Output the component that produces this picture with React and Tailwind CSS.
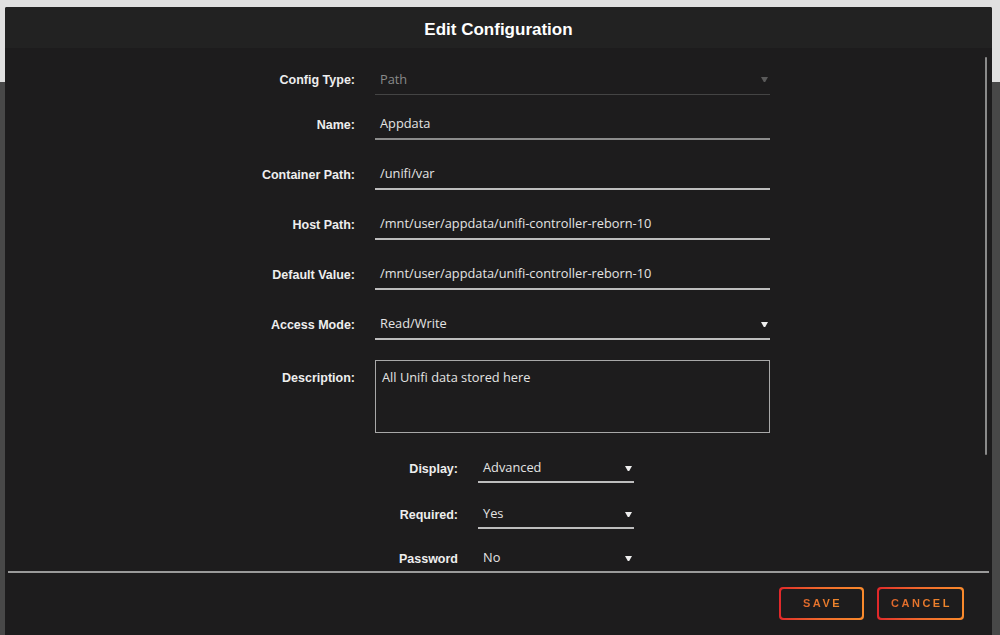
import React from "react";

const Arrow = ({ className }) => (
  <svg width="7" height="7" viewBox="0 0 7 7" className={className}>
    <path d="M0 1 H7 L4.2 6 H2.8 Z" fill="currentColor" />
  </svg>
);

const labelCls = "text-right text-[12.5px] font-bold text-[#eeeeee]";
const valueFont = { fontFamily: '"Open Sans", "Liberation Sans", sans-serif' };

function TextRow({ label, value, mt, disabled, select, line }) {
  return (
    <div className={`flex items-center ${mt}`}>
      <div className={`w-[350px] ${labelCls}`}>{label}</div>
      <div
        className={`ml-[20px] w-[395px] h-[30px] flex items-center justify-between pl-[5px] pr-[2px] ${line}`}
      >
        <span style={valueFont} className={`text-[12.8px] ${disabled ? "text-[#8a8a8a]" : "text-[#e4e4e4]"}`}>{value}</span>
        {select && <Arrow className={disabled ? "text-[#5a5a5a]" : "text-[#eeeeee]"} />}
      </div>
    </div>
  );
}

function SmallSelect({ label, value, mt, line }) {
  return (
    <div className={`flex items-center ${mt}`}>
      <div className={`w-[453px] ${labelCls}`}>{label}</div>
      <div className={`ml-[20px] w-[156px] h-[28px] flex items-center justify-between pl-[5px] pr-[2px] ${line}`}>
        <span style={valueFont} className="text-[12.8px] text-[#e4e4e4]">{value}</span>
        <Arrow className="text-[#eeeeee]" />
      </div>
    </div>
  );
}

function GradButton({ children, w }) {
  return (
    <div className={`${w} h-[33px] rounded-[4px] p-[2px] bg-gradient-to-r from-[#e0262a] via-[#f06a2c] to-[#f98a2c]`}>
      <div className="w-full h-full rounded-[3px] bg-[#1d1c1d] flex items-center justify-center">
        <span className="text-[11px] font-bold tracking-[2.5px] pl-[2px] bg-gradient-to-r from-[#e0662c] to-[#f0892c] bg-clip-text text-transparent">
          {children}
        </span>
      </div>
    </div>
  );
}

export default function App() {
  return (
    <div
      className="relative w-[1000px] h-[635px] overflow-hidden flex flex-col"
      style={{ fontFamily: '"Liberation Sans", Arial, sans-serif' }}
    >
      <div className="h-[82px] bg-[#e0e0e0]" />
      <div className="flex-1 bg-[#484848]" />

      <div className="absolute left-[5px] top-[7px] w-[987px] h-[640px] bg-[#1d1c1d] rounded-t-[2px] flex flex-col">
        <div className="h-[41px] bg-[#222222] rounded-t-[2px] flex items-center justify-center pt-[4px]">
          <span className="text-[17px] font-bold text-white">Edit Configuration</span>
        </div>

        <div className="relative h-[523px] overflow-hidden">
          <div className="flex flex-col pt-[17px]">
            <TextRow label="Config Type:" value="Path" disabled select mt="" line="border-b border-[#444444]" />
            <TextRow label="Name:" value="Appdata" mt="mt-[15px]" line="border-b-2 border-[#8c8c8c]" />
            <TextRow label="Container Path:" value="/unifi/var" mt="mt-[20px]" line="border-b-2 border-[#bdbdbd]" />
            <TextRow label="Host Path:" value="/mnt/user/appdata/unifi-controller-reborn-10" mt="mt-[20px]" line="border-b-2 border-[#bdbdbd]" />
            <TextRow label="Default Value:" value="/mnt/user/appdata/unifi-controller-reborn-10" mt="mt-[20px]" line="border-b-2 border-[#bdbdbd]" />
            <TextRow label="Access Mode:" value="Read/Write" select mt="mt-[20px]" line="border-b-2 border-[#bdbdbd]" />

            <div className="flex items-start mt-[20px]">
              <div className={`w-[350px] pt-[9px] ${labelCls}`}>Description:</div>
              <div className="ml-[20px] w-[395px] h-[73px] border border-[#a8a8a8] px-[6px] pt-[4px]">
                <span style={valueFont} className="text-[12.8px] text-[#e4e4e4]">All Unifi data stored here</span>
              </div>
            </div>

            <SmallSelect label="Display:" value="Advanced" mt="mt-[22px]" line="border-b-2 border-[#bdbdbd]" />
            <SmallSelect label="Required:" value="Yes" mt="mt-[18px]" line="border-b-2 border-[#bdbdbd]" />
            <SmallSelect label="Password" value="No" mt="mt-[16px]" line="border-b-2 border-[#bdbdbd]" />
          </div>

          <div className="absolute right-[5px] top-[9px] w-[2px] h-[398px] bg-[#8a8a8a] rounded-full" />
        </div>

        <div className="mx-[3px] h-[2px] bg-[#9a9a9a]" />

        <div className="flex justify-end gap-[13px] pr-[28px] pt-[14px]">
          <GradButton w="w-[85px]">SAVE</GradButton>
          <GradButton w="w-[87px]">CANCEL</GradButton>
        </div>
      </div>
    </div>
  );
}
